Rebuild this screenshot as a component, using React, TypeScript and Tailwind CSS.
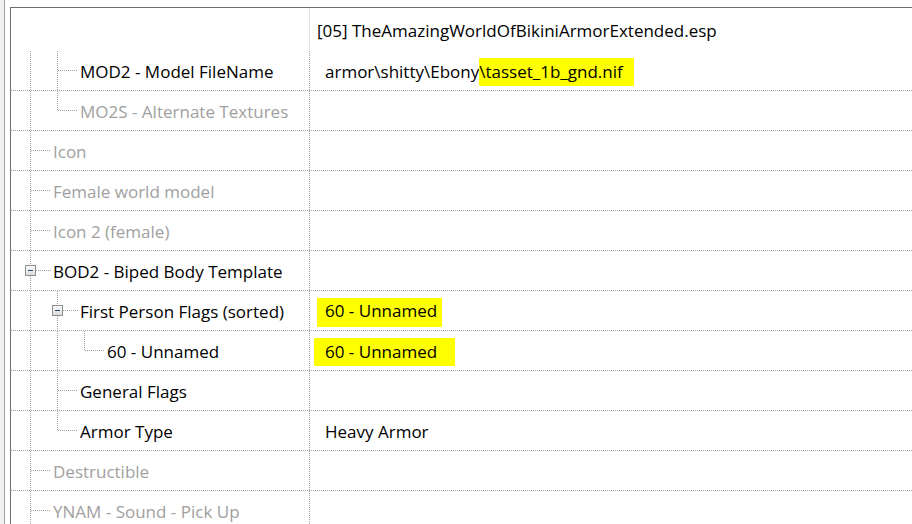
import React from "react";

const D = "#a0a0a0";

type Seg = [number, number];

function V({ x, segs = [[0, 39]] }: { x: number; segs?: Seg[] }) {
  return (
    <>
      {segs.map(([a, b], i) => (
        <line key={i} x1={x + 0.5} x2={x + 0.5} y1={a} y2={b} stroke={D} strokeWidth={1} strokeDasharray="1 1" />
      ))}
    </>
  );
}

function H({ x1, x2, y = 19 }: { x1: number; x2: number; y?: number }) {
  return <line x1={x1} x2={x2} y1={y + 0.5} y2={y + 0.5} stroke={D} strokeWidth={1} strokeDasharray="1 1" />;
}

function Box({ x }: { x: number }) {
  return (
    <g>
      <rect x={x + 0.5} y={14.5} width={10} height={10} fill="url(#bx)" stroke="#8e8f8f" strokeWidth={1} />
      <line x1={x + 3} x2={x + 8} y1={19.5} y2={19.5} stroke="#24407e" strokeWidth={1} />
    </g>
  );
}

type Row = {
  label: string;
  level: 1 | 2 | 3;
  dim?: boolean;
  tree: React.ReactNode;
  value?: React.ReactNode;
};

const W = { 1: 42, 2: 69, 3: 96 } as const;

const rows: Row[] = [
  {
    label: "MOD2 - Model FileName",
    level: 2,
    tree: (
      <>
        <V x={19} />
        <V x={46} />
        <H x1={47} x2={67} />
      </>
    ),
    value: (
      <span>
        armor\shitty\Ebony
        <span className="inline-block bg-[#ffff00] pr-[11px] py-[2px] rounded-[1px]">\tasset_1b_gnd.nif</span>
      </span>
    ),
  },
  {
    label: "MO2S - Alternate Textures",
    level: 2,
    dim: true,
    tree: (
      <>
        <V x={19} />
        <V x={46} segs={[[0, 20]]} />
        <H x1={47} x2={67} />
      </>
    ),
  },
  { label: "Icon", level: 1, dim: true, tree: (<><V x={19} /><H x1={20} x2={40} /></>) },
  { label: "Female world model", level: 1, dim: true, tree: (<><V x={19} /><H x1={20} x2={40} /></>) },
  { label: "Icon 2 (female)", level: 1, dim: true, tree: (<><V x={19} /><H x1={20} x2={40} /></>) },
  {
    label: "BOD2 - Biped Body Template",
    level: 1,
    tree: (
      <>
        <V x={19} segs={[[0, 14], [25, 39]]} />
        <H x1={25} x2={40} />
        <Box x={14} />
      </>
    ),
  },
  {
    label: "First Person Flags (sorted)",
    level: 2,
    tree: (
      <>
        <V x={19} />
        <V x={46} segs={[[0, 14], [25, 39]]} />
        <H x1={52} x2={67} />
        <Box x={41} />
      </>
    ),
    value: (
      <span className="inline-block bg-[#ffff00] -ml-[8px] pl-[8px] pr-[5px] pt-[1px] pb-[4px] rounded-[1px]">60 - Unnamed</span>
    ),
  },
  {
    label: "60 - Unnamed",
    level: 3,
    tree: (
      <>
        <V x={19} />
        <V x={46} />
        <V x={73} segs={[[0, 20]]} />
        <H x1={74} x2={94} />
      </>
    ),
    value: (
      <span className="inline-block bg-[#ffff00] -ml-[11px] pl-[11px] pr-[18px] py-[2px] rounded-[1px]">60 - Unnamed</span>
    ),
  },
  {
    label: "General Flags",
    level: 2,
    tree: (
      <>
        <V x={19} />
        <V x={46} />
        <H x1={47} x2={67} />
      </>
    ),
  },
  {
    label: "Armor Type",
    level: 2,
    tree: (
      <>
        <V x={19} />
        <V x={46} segs={[[0, 20]]} />
        <H x1={47} x2={67} />
      </>
    ),
    value: <span>Heavy Armor</span>,
  },
  { label: "Destructible", level: 1, dim: true, tree: (<><V x={19} /><H x1={20} x2={40} /></>) },
  { label: "YNAM - Sound - Pick Up", level: 1, dim: true, tree: (<><V x={19} /><H x1={20} x2={40} /></>) },
];

export default function App() {
  return (
    <div
      className="w-[912px] h-[524px] overflow-hidden bg-white flex text-[17px] leading-[24px] text-black"
      style={{ fontFamily: '"Open Sans", "Noto Sans", sans-serif' }}
    >
      <svg width="0" height="0" className="absolute">
        <defs>
          <linearGradient id="bx" x1="0" y1="0" x2="0" y2="1">
            <stop offset="0" stopColor="#ffffff" />
            <stop offset="1" stopColor="#d9d9d9" />
          </linearGradient>
        </defs>
      </svg>
      <div className="w-[4px] shrink-0 bg-[#f0f0f0]" />
      <div className="w-[1px] shrink-0 bg-[#a0a0a0]" />
      <div className="w-[5px] shrink-0 bg-white" />
      <div className="flex-1 mt-[7px] border-l border-t border-[#6d6d6d] flex flex-col min-w-0">
        <div className="h-[43px] shrink-0 flex">
          <div className="w-[299px] shrink-0 border-r border-[#e5e5e5]" />
          <div className="flex-1 flex items-center pl-[7px] pt-[2px] whitespace-nowrap">
            [05] TheAmazingWorldOfBikiniArmorExtended.esp
          </div>
        </div>
        {rows.map((r, i) => (
          <div key={i} className="h-[40px] shrink-0 flex border-b border-dotted border-[#a0a0a0]">
            <div className="w-[299px] shrink-0 flex items-stretch border-r border-dotted border-[#a0a0a0]">
              <svg width={W[r.level]} height={39} className="shrink-0 block" shapeRendering="crispEdges">
                {r.tree}
              </svg>
              <div className={`flex items-center pt-[3px] whitespace-nowrap ${r.dim ? "text-[#a0a0a0]" : "text-black"}`}>
                {r.label}
              </div>
            </div>
            <div className="flex-1 flex items-center pl-[15px] pt-[3px] whitespace-nowrap">{r.value}</div>
          </div>
        ))}
      </div>
    </div>
  );
}
